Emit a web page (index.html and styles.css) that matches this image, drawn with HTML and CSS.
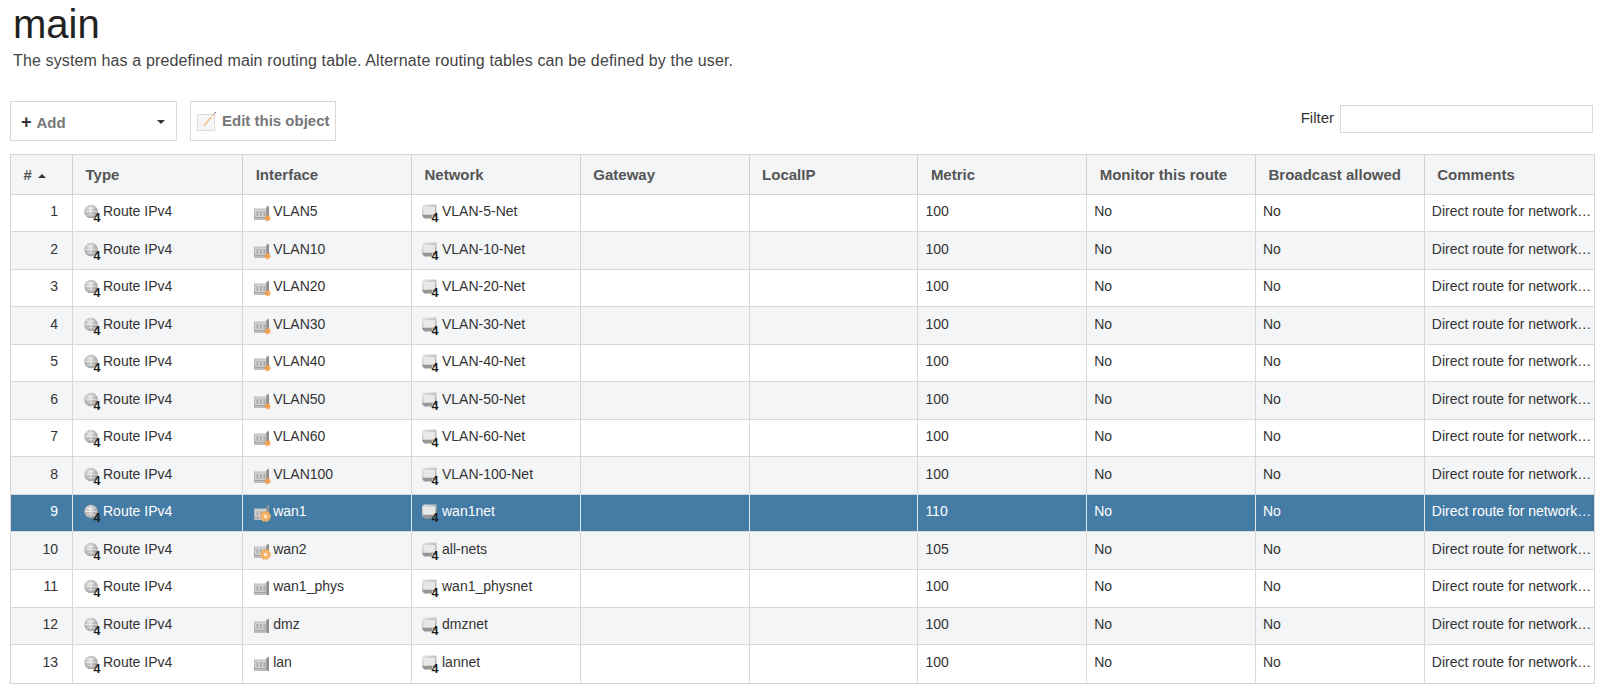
FILE: index.html
```html
<!DOCTYPE html>
<html lang="en">
<head>
<meta charset="utf-8">
<title>main</title>
<link rel="stylesheet" href="styles.css">
</head>
<body>
<svg class="sprite" aria-hidden="true">
  <defs>
    <radialGradient id="g-globe" cx="40%" cy="35%" r="70%"><stop offset="0" stop-color="#e4e4e4"/><stop offset="1" stop-color="#949494"/></radialGradient>
    <linearGradient id="g-card" x1="0" y1="0" x2="0" y2="1"><stop offset="0" stop-color="#c8c8c8"/><stop offset="1" stop-color="#9c9c9c"/></linearGradient>
    <linearGradient id="g-mon" x1="0" y1="0" x2="1" y2="1"><stop offset="0" stop-color="#e8e8e8"/><stop offset="1" stop-color="#a0a0a0"/></linearGradient>
    <symbol id="route" viewBox="0 0 18 18">
      <circle cx="7" cy="7.500" r="6.800" fill="url(#g-globe)"/>
      <path d="M1 7.500h12M7 1v13M3 3.500q4 2.200 8 0M3 11.500q4-2.200 8 0" fill="none" stroke="#fff" stroke-width=".9" opacity=".55"/>
      <text x="9.500" y="17.800" class="four">4</text>
    </symbol>
    <symbol id="net" viewBox="0 0 18 18">
      <path d="M0 2.500 2 .5h12.500v12H0z" fill="url(#g-mon)"/>
      <path d="M1.500 3h11.500v7.500H1.500z" fill="#e8e8e8"/>
      <path d="M0 11h10v3.500H2z" fill="#969696"/>
      <text x="9.500" y="18" class="four">4</text>
    </symbol>
    <symbol id="card" viewBox="0 0 18 18">
      <path d="M0 4.500h11.500L15 1v15H0z" fill="url(#g-card)"/>
      <path d="M1 5.500h11v7.500H1z" fill="#d2d2d2"/>
      <path d="M2.500 7h2v5h-2zM6 7h2v5H6zM9.500 7h2v5h-2z" fill="#aeaeae"/>
      <path d="M12.500 2.500H15V16h-2.500z" fill="#8e8e8e"/>
      <path d="M0 14h13v2H0z" fill="#bcbcbc"/>
    </symbol>
    <symbol id="vlan" viewBox="0 0 18 18">
      <use href="#card" width="18" height="18"/>
      <path d="M13 10l1 2 2-.8-.5 2 2 1-2 .8.5 2.200-2-1-1.500 1.800-.5-2.300-2.200-.6 1.700-1.300-.6-2.200 2 .7z" fill="#f0a050"/>
    </symbol>
    <symbol id="wan" viewBox="0 0 18 18">
      <use href="#card" width="18" height="18"/>
      <circle cx="11.500" cy="12.500" r="4.600" fill="#f2b063" stroke="#f2b063" stroke-width="1.800" stroke-dasharray="1.800 1.100"/>
      <circle cx="11.500" cy="12.500" r="1.900" fill="#fbe3c0"/>
    </symbol>
    <symbol id="edit" viewBox="0 0 20 20">
      <path d="M.5 3.500h17v16H.5z" fill="#f5f5f5" stroke="#dcdcdc"/>
      <path d="M7 14.500 17 3" fill="none" stroke="#f0bd80" stroke-width="1.300"/>
      <path d="M17 3l2-2" fill="none" stroke="#777"/>
      <path d="M2 5h14v1H2z" fill="#fff"/>
    </symbol>
  </defs>
</svg>

<h1 class="title">main</h1>
<p class="desc">The system has a predefined main routing table. Alternate routing tables can be defined by the user.</p>

<div class="toolbar">
  <div class="actions">
    <button class="btn btn-add" type="button"><span class="plus">+</span><span class="btn-label">Add</span><span class="caret"></span></button>
    <button class="btn btn-edit" type="button"><svg class="edit-icon"><use href="#edit"/></svg><span class="btn-label">Edit this object</span></button>
  </div>
  <label class="filter"><span class="filter-label">Filter</span><input class="filter-input" type="text"></label>
</div>

<table class="grid">
  <colgroup>
    <col class="c-num"><col class="c-type"><col class="c-std"><col class="c-std"><col class="c-std"><col class="c-std"><col class="c-std"><col class="c-std"><col class="c-std"><col class="c-com">
  </colgroup>
  <thead>
    <tr><th># <span class="sort"></span></th><th>Type</th><th>Interface</th><th>Network</th><th>Gateway</th><th>LocalIP</th><th>Metric</th><th>Monitor this route</th><th>Broadcast allowed</th><th>Comments</th></tr>
  </thead>
  <tbody>
    <tr><td class="num">1</td><td><svg class="ico"><use href="#route"/></svg>Route IPv4</td><td><svg class="ico"><use href="#vlan"/></svg>VLAN5</td><td><svg class="ico"><use href="#net"/></svg>VLAN-5-Net</td><td></td><td></td><td>100</td><td>No</td><td>No</td><td>Direct route for network…</td></tr>
    <tr><td class="num">2</td><td><svg class="ico"><use href="#route"/></svg>Route IPv4</td><td><svg class="ico"><use href="#vlan"/></svg>VLAN10</td><td><svg class="ico"><use href="#net"/></svg>VLAN-10-Net</td><td></td><td></td><td>100</td><td>No</td><td>No</td><td>Direct route for network…</td></tr>
    <tr><td class="num">3</td><td><svg class="ico"><use href="#route"/></svg>Route IPv4</td><td><svg class="ico"><use href="#vlan"/></svg>VLAN20</td><td><svg class="ico"><use href="#net"/></svg>VLAN-20-Net</td><td></td><td></td><td>100</td><td>No</td><td>No</td><td>Direct route for network…</td></tr>
    <tr><td class="num">4</td><td><svg class="ico"><use href="#route"/></svg>Route IPv4</td><td><svg class="ico"><use href="#vlan"/></svg>VLAN30</td><td><svg class="ico"><use href="#net"/></svg>VLAN-30-Net</td><td></td><td></td><td>100</td><td>No</td><td>No</td><td>Direct route for network…</td></tr>
    <tr><td class="num">5</td><td><svg class="ico"><use href="#route"/></svg>Route IPv4</td><td><svg class="ico"><use href="#vlan"/></svg>VLAN40</td><td><svg class="ico"><use href="#net"/></svg>VLAN-40-Net</td><td></td><td></td><td>100</td><td>No</td><td>No</td><td>Direct route for network…</td></tr>
    <tr><td class="num">6</td><td><svg class="ico"><use href="#route"/></svg>Route IPv4</td><td><svg class="ico"><use href="#vlan"/></svg>VLAN50</td><td><svg class="ico"><use href="#net"/></svg>VLAN-50-Net</td><td></td><td></td><td>100</td><td>No</td><td>No</td><td>Direct route for network…</td></tr>
    <tr><td class="num">7</td><td><svg class="ico"><use href="#route"/></svg>Route IPv4</td><td><svg class="ico"><use href="#vlan"/></svg>VLAN60</td><td><svg class="ico"><use href="#net"/></svg>VLAN-60-Net</td><td></td><td></td><td>100</td><td>No</td><td>No</td><td>Direct route for network…</td></tr>
    <tr><td class="num">8</td><td><svg class="ico"><use href="#route"/></svg>Route IPv4</td><td><svg class="ico"><use href="#vlan"/></svg>VLAN100</td><td><svg class="ico"><use href="#net"/></svg>VLAN-100-Net</td><td></td><td></td><td>100</td><td>No</td><td>No</td><td>Direct route for network…</td></tr>
    <tr class="selected"><td class="num">9</td><td><svg class="ico"><use href="#route"/></svg>Route IPv4</td><td><svg class="ico"><use href="#wan"/></svg>wan1</td><td><svg class="ico"><use href="#net"/></svg>wan1net</td><td></td><td></td><td>110</td><td>No</td><td>No</td><td>Direct route for network…</td></tr>
    <tr><td class="num">10</td><td><svg class="ico"><use href="#route"/></svg>Route IPv4</td><td><svg class="ico"><use href="#wan"/></svg>wan2</td><td><svg class="ico"><use href="#net"/></svg>all-nets</td><td></td><td></td><td>105</td><td>No</td><td>No</td><td>Direct route for network…</td></tr>
    <tr><td class="num">11</td><td><svg class="ico"><use href="#route"/></svg>Route IPv4</td><td><svg class="ico"><use href="#card"/></svg>wan1_phys</td><td><svg class="ico"><use href="#net"/></svg>wan1_physnet</td><td></td><td></td><td>100</td><td>No</td><td>No</td><td>Direct route for network…</td></tr>
    <tr><td class="num">12</td><td><svg class="ico"><use href="#route"/></svg>Route IPv4</td><td><svg class="ico"><use href="#card"/></svg>dmz</td><td><svg class="ico"><use href="#net"/></svg>dmznet</td><td></td><td></td><td>100</td><td>No</td><td>No</td><td>Direct route for network…</td></tr>
    <tr><td class="num">13</td><td><svg class="ico"><use href="#route"/></svg>Route IPv4</td><td><svg class="ico"><use href="#card"/></svg>lan</td><td><svg class="ico"><use href="#net"/></svg>lannet</td><td></td><td></td><td>100</td><td>No</td><td>No</td><td>Direct route for network…</td></tr>
  </tbody>
</table>
</body>
</html>
```
FILE: styles.css
```css
* { box-sizing: border-box; }
html, body { margin: 0; padding: 0; }
body {
  padding: 0 10px;
  background: #fff;
  color: #333;
  font-family: "Liberation Sans", Arial, sans-serif;
  font-size: 14px;
  width: 1605px;
  overflow: hidden;
}
.sprite { width: 0; height: 0; overflow: hidden; display: block; }
.four { font: bold 12.500px "Liberation Sans", Arial, sans-serif; fill: #1c1c1c; }
.title {
  margin: 0 0 0 3px;
  font-weight: 400;
  font-size: 40px;
  line-height: 48px;
  color: #222;
}
.desc {
  margin: 2px 0 0 3px;
  font-size: 16px;
  line-height: 22px;
  letter-spacing: .13px;
  color: #444;
}
.toolbar {
  display: flex;
  justify-content: space-between;
  align-items: flex-start;
  height: 53px;
  margin-top: 29px;
}
.actions { display: flex; gap: 13px; align-items: flex-start; }
.btn {
  display: flex;
  align-items: center;
  height: 40px;
  background: #fff;
  border: 1px solid #d9d9d9;
  padding: 0;
  font: bold 15px "Liberation Sans", Arial, sans-serif;
  color: #777;
  white-space: nowrap;
}
.btn-add { width: 167px; padding: 2px 11px 0 10px; }
.btn-add .btn-label { flex: 1; text-align: left; }
.plus { color: #333; font-size: 18px; line-height: 18px; margin-right: 5px; font-weight: 700; }
.caret {
  width: 0; height: 0;
  border-left: 4.500px solid transparent;
  border-right: 4.500px solid transparent;
  border-top: 4px solid #333;
}
.btn-edit { width: 146px; padding: 0 0 2px 6px; gap: 5px; }
.edit-icon { width: 20px; height: 20px; flex: none; margin-top: 2px; }
.filter {
  display: flex;
  align-items: center;
  gap: 6px;
  margin-top: 4px;
  margin-right: 2px;
  font-size: 15px;
  color: #333;
}
.filter-label { padding-bottom: 4px; }
.filter-input {
  width: 253px;
  height: 28px;
  border: 1px solid #d9d9d9;
  background: #fff;
  padding: 0 4px;
}
.grid {
  table-layout: fixed;
  border-collapse: separate;
  border-spacing: 0;
  width: 1585px;
  border: 1px solid #d5d5d5;
}
.c-num { width: 61px; }
.c-type { width: 170.200px; }
.c-std { width: 168.800px; }
.grid th {
  height: 39.500px;
  padding: 0 0 0 12.500px;
  text-align: left;
  font-size: 15px;
  font-weight: 700;
  color: #555;
  background: #f4f5f7;
  border-left: 1px solid #d0d0d0;
  border-bottom: 1px solid #d5d5d5;
  white-space: nowrap;
}
.grid th:first-child { border-left: 0; }
.sort {
  display: inline-block;
  width: 0; height: 0;
  margin-left: 2px;
  vertical-align: 2px;
  border-left: 4px solid transparent;
  border-right: 4px solid transparent;
  border-bottom: 4px solid #333;
}
.grid td {
  height: 37.550px;
  padding: 8.500px 0 0 7px;
  line-height: 16px;
  vertical-align: baseline;
  font-size: 14px;
  color: #333;
  border-left: 1px solid #d8d8d8;
  border-bottom: 1px solid #d8d8d8;
  white-space: nowrap;
  background: #fff;
}
.grid td:first-child { border-left: 0; }
.grid tbody tr:nth-child(even) td { background: #f4f5f7; }
.grid tbody tr:last-child td { border-bottom: 0; }
.grid td.num { text-align: right; padding-left: 0; padding-right: 14px; }
.grid tbody tr.selected td { background: #457ca5; color: #fff; border-left-color: #dfe6ec; }
.ico { width: 18px; height: 18px; vertical-align: -6px; margin: 0 1.500px 0 3.500px; }
```
